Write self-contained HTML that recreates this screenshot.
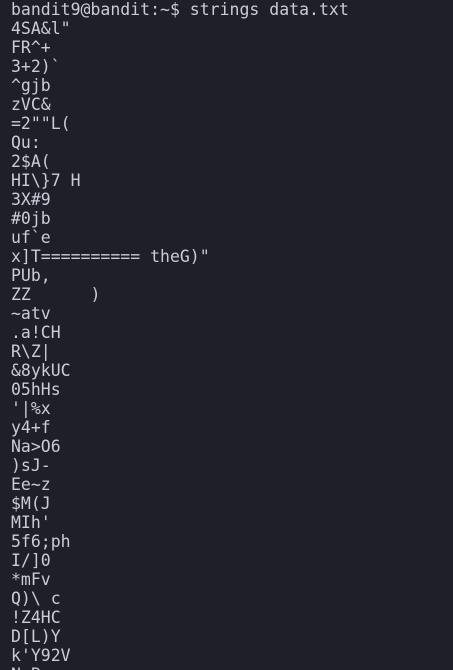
<!DOCTYPE html>
<html><head><meta charset="utf-8"><style>
html,body{margin:0;padding:0;background:#1e1f29;width:453px;height:670px;overflow:hidden}
pre{margin:0;padding:0 0 0 11px;font-family:"DejaVu Sans Mono","Liberation Mono",monospace;font-size:16.5px;line-height:19px;color:#c9ccd9;position:relative;top:0px}
</style></head><body><pre>bandit9@bandit:~$ strings data.txt
4SA&amp;l"
FR^+
3+2)`
^gjb
zVC&amp;
=2""L(
Qu:
2$A(
HI\}7 H
3X#9
#0jb
uf`e
x]T========== theG)"
PUb,
ZZ      )
~atv
.a!CH
R\Z|
&amp;8ykUC
05hHs
'|%x
y4+f
Na&gt;O6
)sJ-
Ee~z
$M(J
MIh'
5f6;ph
I/]0
*mFv
Q)\ c
!Z4HC
D[L)Y
k'Y92V
N~B.</pre></body></html>
